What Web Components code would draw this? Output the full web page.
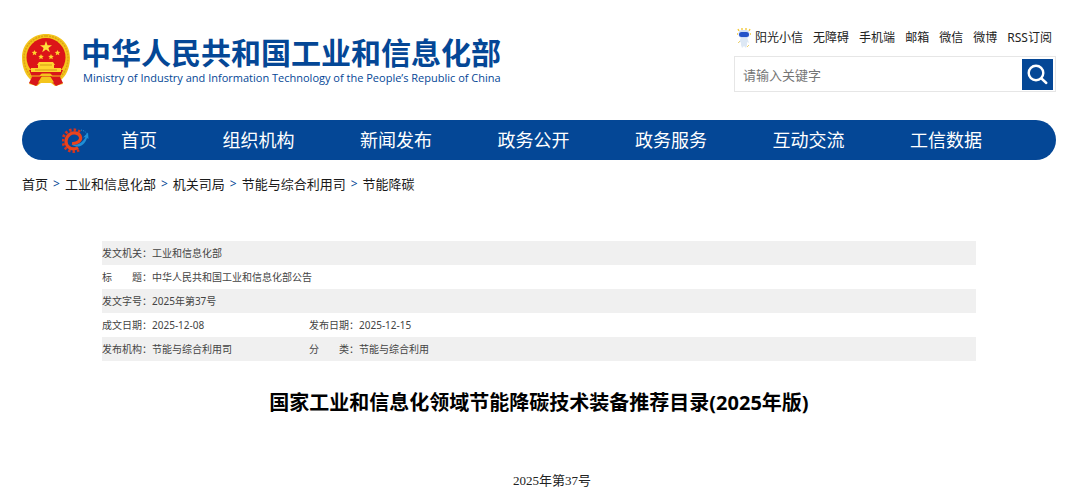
<!DOCTYPE html>
<html lang="zh-CN">
<head>
<meta charset="utf-8">
<meta name="viewport" content="width=device-width, initial-scale=1">
<title>国家工业和信息化领域节能降碳技术装备推荐目录(2025年版)</title>
<style>
  body { margin: 0; background: #fff; color: #1a1a1a; font-family: "Noto Sans", "Noto Sans CJK SC", sans-serif; }
</style>
</head>
<body>
<site-page>
  <site-logo slot="brand"></site-logo>
  <quick-links slot="tools"></quick-links>
  <search-box slot="tools"></search-box>
  <main-nav slot="nav"></main-nav>
  <crumb-trail slot="nav"></crumb-trail>
  <doc-meta></doc-meta>
  <doc-article>
    <span slot="title">国家工业和信息化领域节能降碳技术装备推荐目录(2025年版)</span>
    <span slot="number">2025年第37号</span>
  </doc-article>
</site-page>
<script>
const define = (name, html) => customElements.define(name, class extends HTMLElement {
  constructor() {
    super();
    const t = document.createElement('template');
    t.innerHTML = html;
    this.attachShadow({ mode: 'open' }).append(t.content.cloneNode(true));
  }
});

define('site-page', `
<style>
  :host { display: block; padding: 28px 24px 0 22px; }
  header { display: flex; justify-content: space-between; align-items: flex-start; margin-bottom: 28px; }
  .brand { padding-top: 6px; }
  .tools { display: flex; flex-direction: column; gap: 8px; width: 322px; }
  main { padding: 0 80px; margin-top: 47px; }
</style>
<header>
  <div class="brand"><slot name="brand"></slot></div>
  <div class="tools"><slot name="tools"></slot></div>
</header>
<slot name="nav"></slot>
<main><slot></slot></main>`);

define('site-logo', `
<style>
  :host { display: block; color: #044796; }
  a { display: flex; gap: 11px; color: inherit; text-decoration: none; }
  svg { width: 48px; height: 53px; flex: none; }
  .cn { display: block; padding-top: 2px; font-size: 30px; line-height: 36px; font-weight: 700; font-family: "Liberation Sans", "Noto Sans CJK SC", sans-serif; }
  .en { display: block; font-size: 11px; line-height: 12px; font-weight: 400; padding-left: 2px; font-family: "Open Sans", "Noto Sans", sans-serif; white-space: nowrap; }
</style>
<a href="#">
  <svg viewBox="0 0 48 53" aria-hidden="true">
    <path d="M24 0C10 0 0 10 0 24c0 10 4 18 9 22l-2 4 8 2 4-3h10l4 3 8-2-2-4c5-4 9-12 9-22C48 10 38 0 24 0Z" fill="#f4c51c"/>
    <path d="M24 2C11 2 2 12 2 24c0 9 4 16 9 20M24 2c13 0 22 10 22 22 0 9-4 16-9 20" fill="none" stroke="#dda313" stroke-width="1.5" stroke-dasharray="2 1"/>
    <circle cx="24" cy="23.500" r="19.500" fill="#dc1518"/>
    <path d="M7 36h34l-3 7 3 6-7 3-5-5h-10l-5 5-7-3 3-6Z" fill="#d8171a"/>
    <path d="m24 7 1.500 4.200h4.500l-3.600 2.700 1.400 4.300-3.800-2.600-3.800 2.600 1.400-4.300L18 11.200h4.500Z" fill="#ffe13a"/>
    <g fill="#ffd52e">
      <path d="m12.500 16 .8 1.800 2 .2-1.500 1.300.5 2-1.800-1-1.800 1 .5-2-1.500-1.300 2-.2ZM35.500 16l.8 1.800 2 .2-1.500 1.300.5 2-1.800-1-1.800 1 .5-2-1.500-1.300 2-.2ZM19 20l.8 1.800 2 .2-1.500 1.300.5 2-1.800-1-1.800 1 .5-2-1.500-1.300 2-.2ZM29 20l.8 1.800 2 .2-1.500 1.300.5 2-1.800-1-1.800 1 .5-2-1.500-1.300 2-.2Z"/>
      <path d="M17 28h14l2 3H15ZM16 31h16v3H16ZM9 34h30v4H9Z"/>
    </g>
    <path d="M18 31h12M13 36h22" stroke="#c98b10" stroke-width=".8"/>
    <path d="M9 42h9l2-2h8l2 2h9M17 48l3-5h8l3 5Z" fill="#f4c51c" stroke="#f4c51c" stroke-width="1.200"/>
  </svg>
  <span><span class="cn">中华人民共和国工业和信息化部</span><span class="en">Ministry of Industry and Information Technology of the People’s Republic of China</span></span>
</a>`);

define('quick-links', `
<style>
  :host { display: block; }
  nav { display: flex; justify-content: space-between; align-items: center; padding: 0 4px 0 3px; height: 20px; }
  a { display: flex; align-items: center; gap: 4px; color: #222; font-size: 12px; line-height: 20px; text-decoration: none; white-space: nowrap; }
  svg { width: 14px; height: 20px; }
</style>
<nav aria-label="快捷链接">
  <a href="#"><svg viewBox="0 0 14 20" aria-hidden="true">
    <path d="M2 3 1 1M5 2V0M9 2V0M12 3l1-2M1 6H0M13 6h1" stroke="#f3c93b" stroke-width="1.400"/>
    <path d="M4 9h6l2 6-2-1v3l-1 3-2-2-2 2-1-3v-3l-2 1Z" fill="#dde8f5"/>
    <rect x="1.500" y="2" width="11" height="8" rx="4" fill="#cfdcf4"/>
    <rect x="2" y="4" width="10" height="5" rx="2.500" fill="#2453c9"/>
    <path d="m1 15 2-2M10 19l2-2" stroke="#f0d26a"/>
  </svg>阳光小信</a>
  <a href="#">无障碍</a><a href="#">手机端</a><a href="#">邮箱</a><a href="#">微信</a><a href="#">微博</a><a href="#">RSS订阅</a>
</nav>`);

define('search-box', `
<style>
  :host { display: block; }
  form { display: flex; align-items: center; height: 34px; border: 1px solid #e6e6e6; padding-right: 2px; }
  input { flex: 1; min-width: 0; height: 32px; border: 0; outline: 0; padding: 0 8px; background: none; color: #333; font: 13px/20px "Noto Sans CJK SC", sans-serif; }
  input::placeholder { color: #757575; }
  button { display: grid; place-items: center; width: 31px; height: 31px; border: 0; padding: 0; background: #044796; }
  svg { width: 21px; height: 21px; }
</style>
<form role="search" onsubmit="return false">
  <input type="search" aria-label="搜索" placeholder="请输入关键字">
  <button aria-label="搜索"><svg viewBox="0 0 21 21" fill="none" stroke="#fff" stroke-width="2.400" stroke-linecap="round" aria-hidden="true"><circle cx="9" cy="9" r="7.300"/><path d="m14.500 14.500 4.800 4.500"/></svg></button>
</form>`);

define('main-nav', `
<style>
  :host { display: block; }
  nav { display: flex; align-items: center; height: 40px; border-radius: 20px; background: #044796; padding: 0 74px 0 40px; }
  svg { width: 27px; height: 27px; margin-right: 32px; flex: none; }
  ul { flex: 1; display: flex; justify-content: space-between; list-style: none; margin: 0; padding: 0; }
  a { display: block; color: #fff; font: 18px/38px "Noto Sans CJK SC", sans-serif; padding-bottom: 2px; text-decoration: none; white-space: nowrap; }
</style>
<nav aria-label="主导航">
  <svg viewBox="0 0 27 27" fill="none" aria-hidden="true">
    <path d="M18 5A10.800 10.800 0 1 0 17 23" stroke="#d8341c" stroke-width="3" stroke-dasharray="2.400 2"/>
    <path d="M10 16.500c5 .5 9.500-3 8.500-6.500-1-4-7-5.500-11-2.500-4.500 3.500-4.500 9.500-1 12.500 3 2.500 7 2 9.500.5" stroke="#ea431c" stroke-width="3.200"/>
    <path d="M10 17.500c5 1.500 11-2 13.500-7.500l-2.500.5L26 5.500l.5 6.500-1.500-1c-2 7-9 11.500-15 6.500Z" fill="#1f8fd6"/>
    <path d="M19 3c3 .5 5 2 6 4" stroke="#1f8fd6" stroke-dasharray="1 1"/>
  </svg>
  <ul>
    <li><a href="#">首页</a></li><li><a href="#">组织机构</a></li><li><a href="#">新闻发布</a></li><li><a href="#">政务公开</a></li><li><a href="#">政务服务</a></li><li><a href="#">互动交流</a></li><li><a href="#">工信数据</a></li>
  </ul>
</nav>`);

define('crumb-trail', `
<style>
  :host { display: block; margin-top: 14px; }
  nav { display: flex; gap: 5px; font-size: 13px; line-height: 20px; }
  a { color: #1a1a1a; text-decoration: none; }
  span { color: #044796; font-size: 12px; }
</style>
<nav aria-label="当前位置"><a href="#">首页</a><span>&gt;</span><a href="#">工业和信息化部</a><span>&gt;</span><a href="#">机关司局</a><span>&gt;</span><a href="#">节能与综合利用司</a><span>&gt;</span><a href="#">节能降碳</a></nav>`);

define('doc-meta', `
<style>
  :host { display: block; }
  table { width: 100%; border-collapse: collapse; table-layout: fixed; font-size: 10px; line-height: 24px; color: #444; }
  .label { width: 50px; } .value { width: 157px; }
  th, td { padding: 0; text-align: left; font-weight: 400; white-space: nowrap; height: 24px; }
  tr:nth-child(odd) { background: #f0f0f0; }
</style>
<table>
  <colgroup><col class="label"><col class="value"><col class="label"><col></colgroup>
  <tbody>
  <tr><th scope="row">发文机关：</th><td colspan="3">工业和信息化部</td></tr>
  <tr><th scope="row">标　　题：</th><td colspan="3">中华人民共和国工业和信息化部公告</td></tr>
  <tr><th scope="row">发文字号：</th><td colspan="3">2025年第37号</td></tr>
  <tr><th scope="row">成文日期：</th><td>2025-12-08</td><th scope="row">发布日期：</th><td>2025-12-15</td></tr>
  <tr><th scope="row">发布机构：</th><td>节能与综合利用司</td><th scope="row">分　　类：</th><td>节能与综合利用</td></tr>
  </tbody>
</table>`);

define('doc-article', `
<style>
  :host { display: block; text-align: center; }
  h1 { margin: 27px 0 0; color: #000; font-size: 20px; line-height: 30px; font-weight: 700; }
  p { margin: 53px 0 0; color: #222; font: 13px/20px "Liberation Serif", "Noto Sans CJK SC", serif; text-indent: 2em; }
</style>
<h1><slot name="title"></slot></h1>
<p><slot name="number"></slot></p>`);
</script>
</body>
</html>
